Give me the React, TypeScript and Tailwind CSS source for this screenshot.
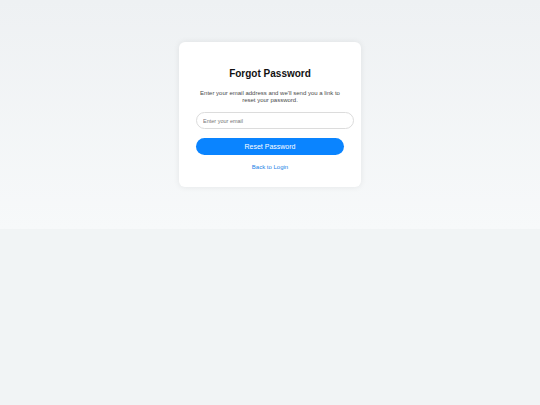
import React, { useState } from "react";

export default function App() {
  const [email, setEmail] = useState("");

  return (
    <div className="min-h-screen bg-[#f1f4f5] font-['Liberation_Sans',Arial,sans-serif]">
      {/* Top band */}
      <div className="h-[229px] bg-gradient-to-b from-[#eef1f3] to-[#f7f9fa] flex justify-center pt-[42px]">
        {/* Card */}
        <div className="w-[182px] h-[145px] bg-white rounded-[6px] shadow-[0_0_6px_rgba(0,0,0,0.08)] px-[17px] pt-[26px] flex flex-col items-start">
          <h2 className="w-[148px] text-center text-[10px] leading-[12px] font-bold text-[#111]">
            Forgot Password
          </h2>
          <p className="w-[148px] mt-[10px] text-center text-[6px] leading-[7px] text-[#4a4a4a]">
            Enter your email address and we'll send you a link to reset your password.
          </p>

          <input
            type="email"
            value={email}
            onChange={(e) => setEmail(e.target.value)}
            placeholder="Enter your email"
            className="mt-[8px] w-[158px] h-[17px] shrink-0 rounded-full border border-[#dcdcdc] px-[6px] text-[5.5px] text-[#333] placeholder-[#777] outline-none"
          />

          <button
            type="button"
            className="mt-[9px] w-[148px] h-[17px] rounded-full bg-[#0a84ff] text-white text-[7px] leading-[17px]"
          >
            Reset Password
          </button>

          <a href="#" className="mt-[9px] w-[148px] text-center text-[6px] leading-[7px] text-[#1a7fe6]">
            Back to Login
          </a>
        </div>
      </div>
    </div>
  );
}
